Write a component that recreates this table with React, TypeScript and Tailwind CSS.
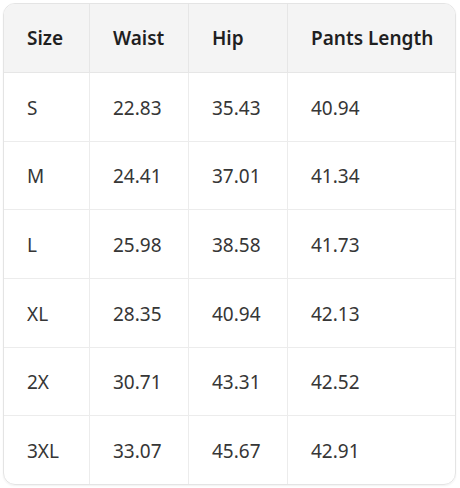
const header = ["Size", "Waist", "Hip", "Pants Length"];

const rows = [
  ["S", "22.83", "35.43", "40.94"],
  ["M", "24.41", "37.01", "41.34"],
  ["L", "25.98", "38.58", "41.73"],
  ["XL", "28.35", "40.94", "42.13"],
  ["2X", "30.71", "43.31", "42.52"],
  ["3XL", "33.07", "45.67", "42.91"],
];

export default function App() {
  return (
    <div className="w-[460px] h-[488px] bg-white p-[3px] pr-[4px]" style={{ fontFamily: '"Noto Sans", "Open Sans", sans-serif' }}>
      <div className="h-[482px] rounded-[12px] border border-[#e4e4e4] overflow-hidden flex flex-col shadow-[0_1px_2px_rgba(0,0,0,0.06)]">
        <div className="grid grid-cols-[86px_99px_99px_1fr] h-[69px] bg-[#f4f4f4] border-b border-[#e6e6e6]">
          {header.map((h, i) => (
            <div
              key={h}
              className={`flex items-center pl-[23px] text-[19px] font-semibold text-[#1f1f1f] ${i < 3 ? "border-r border-[#e6e6e6]" : ""}`}
            >
              {h}
            </div>
          ))}
        </div>
        {rows.map((r, ri) => (
          <div
            key={r[0]}
            className={`grid grid-cols-[86px_99px_99px_1fr] flex-1 ${ri < rows.length - 1 ? "border-b border-[#ececec]" : ""}`}
          >
            {r.map((c, i) => (
              <div
                key={i}
                className={`flex items-center pl-[23px] pt-[2px] text-[19px] text-[#363636] ${i < 3 ? "border-r border-[#ececec]" : ""}`}
              >
                {c}
              </div>
            ))}
          </div>
        ))}
      </div>
    </div>
  );
}
